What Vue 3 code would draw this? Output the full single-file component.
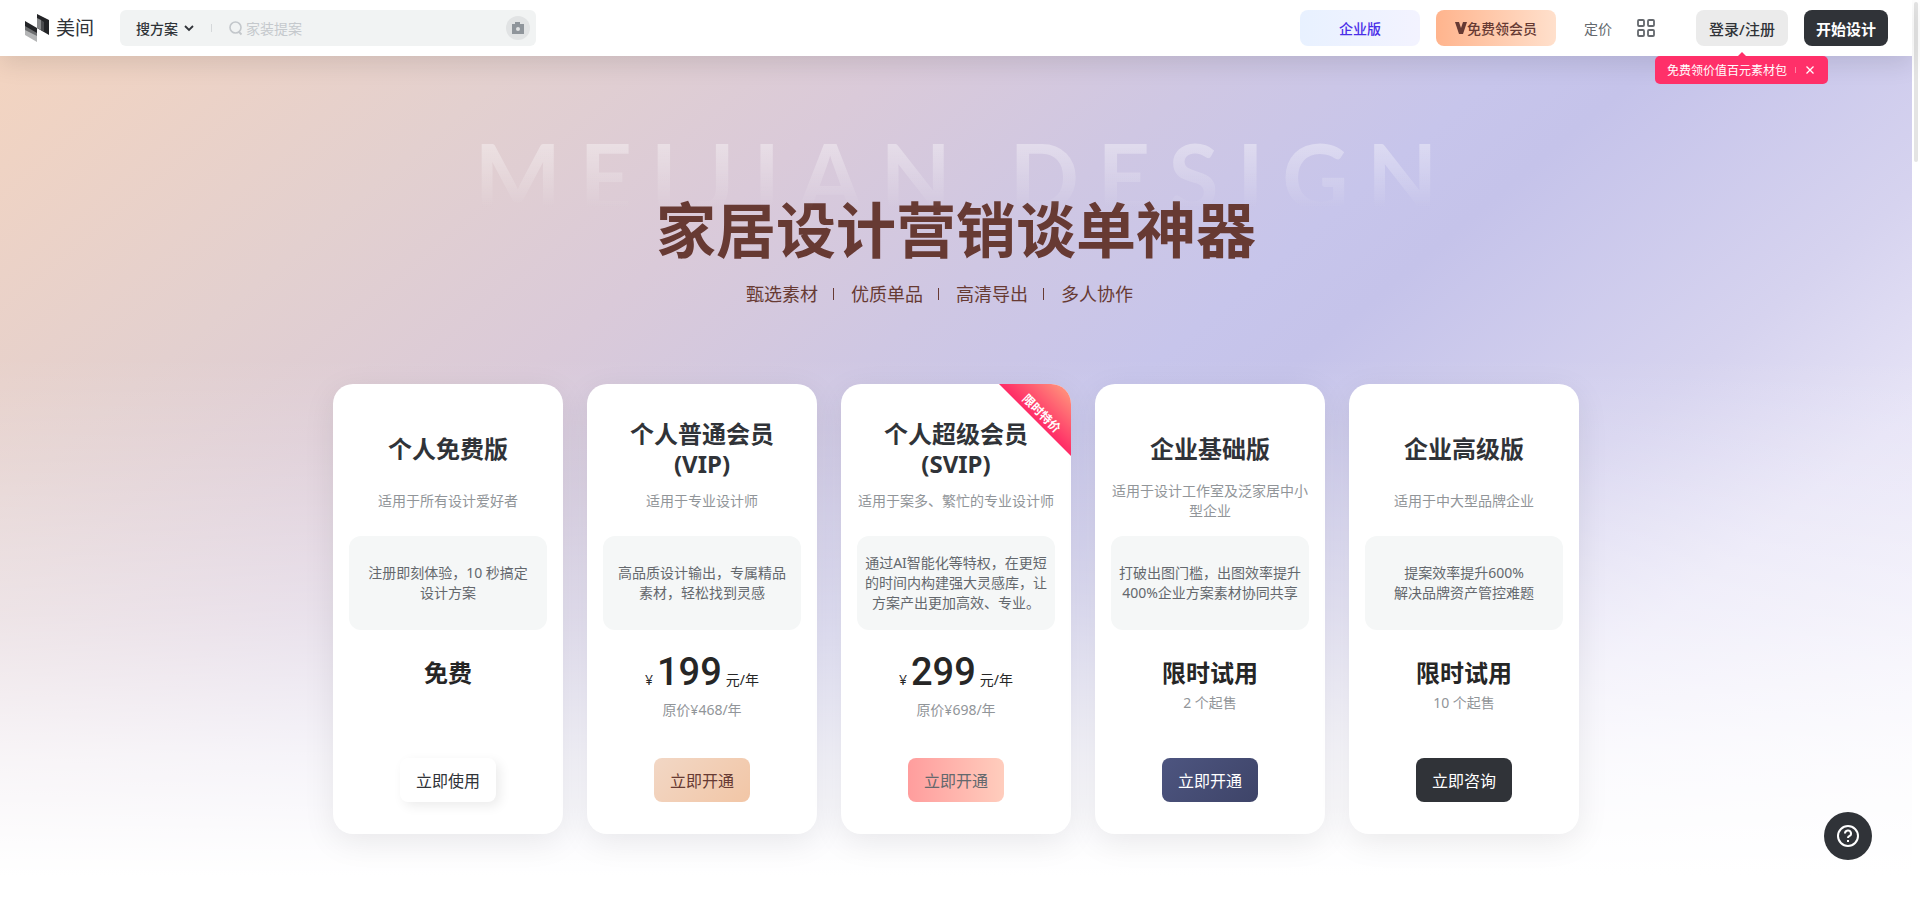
<script setup>
import { ref } from 'vue'

const keyword = ref('')
const category = ref('搜方案')
const tipOpen = ref(true)

const features = ['甄选素材', '优质单品', '高清导出', '多人协作']

const plans = [
  {
    id: 'free',
    name: ['个人免费版'],
    audience: '适用于所有设计爱好者',
    intro: ['注册即刻体验，10 秒搞定', '设计方案'],
    label: '免费',
    action: '立即使用',
  },
  {
    id: 'vip',
    name: ['个人普通会员', '(VIP)'],
    audience: '适用于专业设计师',
    intro: ['高品质设计输出，专属精品', '素材，轻松找到灵感'],
    price: '199',
    note: '原价¥468/年',
    action: '立即开通',
  },
  {
    id: 'svip',
    name: ['个人超级会员', '(SVIP)'],
    audience: '适用于案多、繁忙的专业设计师',
    intro: ['通过AI智能化等特权，在更短的时间内构建强大灵感库，让方案产出更加高效、专业。'],
    price: '299',
    note: '原价¥698/年',
    action: '立即开通',
    ribbon: '限时特价',
  },
  {
    id: 'basic',
    name: ['企业基础版'],
    audience: '适用于设计工作室及泛家居中小型企业',
    intro: ['打破出图门槛，出图效率提升400%企业方案素材协同共享'],
    label: '限时试用',
    note: '2 个起售',
    action: '立即开通',
  },
  {
    id: 'pro',
    name: ['企业高级版'],
    audience: '适用于中大型品牌企业',
    intro: ['提案效率提升600%', '解决品牌资产管控难题'],
    label: '限时试用',
    note: '10 个起售',
    action: '立即咨询',
  },
]
</script>

<template>
  <div class="shell">
    <div class="page">
      <header class="topbar">
        <a class="logo" href="#" aria-label="美间">
          <svg class="logo-mark" width="26" height="28" viewBox="0 0 26 28" aria-hidden="true">
            <path d="M1 7 13 14V21L1 14z" fill="#232427" />
            <path d="M1 12 13 19V24L1 17z" fill="#6d6e70" />
            <path d="M1 16 13 22V28L1 21z" fill="#b4b5b6" />
            <path d="M13 0 25 6V21L13 14z" fill="#232427" />
            <path d="M13 4 17 6V16L13 14z" fill="#8b8c8e" />
            <path d="M17 6 20 8V18L17 16z" fill="#4a4b4e" />
          </svg>
          <span class="logo-name">美间</span>
        </a>

        <form class="search" role="search" @submit.prevent>
          <span class="select-wrap">
            <select v-model="category" class="category" aria-label="搜索类型">
              <option>搜方案</option>
            </select>
            <svg class="chevron" width="10" height="8" viewBox="0 0 10 8" aria-hidden="true">
              <path d="M1 2 5 6 9 2" fill="none" stroke="#303338" stroke-width="1.8" />
            </svg>
          </span>
          <span class="search-line"></span>
          <svg width="15" height="15" viewBox="0 0 15 15" aria-hidden="true">
            <circle cx="6.5" cy="6.5" r="5.5" fill="none" stroke="#c3c7cb" stroke-width="1.6" />
            <path d="M9.5 10.5 12.5 13.5" stroke="#c3c7cb" stroke-width="1.8" />
          </svg>
          <input v-model="keyword" class="keyword" type="text" placeholder="家装提案" aria-label="搜索关键词" />
          <button class="camera" type="button" aria-label="以图搜索">
            <svg width="12" height="12" viewBox="0 0 12 12" aria-hidden="true">
              <path fill-rule="evenodd" d="M3 0H8V2H12V12H0V2H3zM6 5a2 2 0 1 0 0 4 2 2 0 0 0 0-4z" fill="#8f959b" />
            </svg>
          </button>
        </form>

        <nav class="actions">
          <a class="pill enterprise" href="#">企业版</a>
          <a class="pill member" href="#">
            <svg width="12" height="12" viewBox="0 0 12 12" aria-hidden="true">
              <path d="M0 0H4L6 6 8 0H12L8 12H4z" fill="#673a33" />
            </svg>
            免费领会员
          </a>
          <a class="pricing" href="#">定价</a>
          <button class="apps" type="button" aria-label="更多应用">
            <svg width="18" height="18" viewBox="0 0 18 18" fill="none" stroke="#64686d" stroke-width="1.8" aria-hidden="true">
              <rect x="1" y="1" width="6" height="6" rx="1" />
              <rect x="11" y="1" width="6" height="6" rx="1" />
              <rect x="1" y="11" width="6" height="6" rx="1" />
              <rect x="11" y="11" width="6" height="6" rx="1" />
            </svg>
          </button>
          <div class="login-wrap">
            <button class="login" type="button">登录/注册</button>
            <div v-if="tipOpen" class="tip">
              <span>免费领价值百元素材包</span>
              <i class="tip-line"></i>
              <button class="tip-close" type="button" aria-label="关闭" @click="tipOpen = false">
                <svg width="8" height="8" viewBox="0 0 8 8" aria-hidden="true">
                  <path d="M0.500 0.500 7.500 7.500M7.500 0.500 0.500 7.500" stroke="#fff" stroke-width="1.3" />
                </svg>
              </button>
            </div>
          </div>
          <button class="start" type="button">开始设计</button>
        </nav>
      </header>

      <main class="hero">
        <div class="headline">
          <h1>家居设计营销谈单神器</h1>
          <span class="watermark" aria-hidden="true">MEIJIAN DESIGN</span>
        </div>
        <ul class="features">
          <li v-for="item in features" :key="item">{{ item }}</li>
        </ul>

        <section class="plans">
          <article v-for="plan in plans" :key="plan.id" class="card" :class="plan.id">
            <div v-if="plan.ribbon" class="ribbon"><span>{{ plan.ribbon }}</span></div>
            <h2><span v-for="line in plan.name" :key="line">{{ line }}</span></h2>
            <p class="audience">{{ plan.audience }}</p>
            <div class="intro">
              <p v-for="line in plan.intro" :key="line">{{ line }}</p>
            </div>
            <div v-if="plan.price" class="price">
              <small>¥</small><strong>{{ plan.price }}</strong><small>元/年</small>
            </div>
            <div v-else class="label">{{ plan.label }}</div>
            <p v-if="plan.note" class="note">{{ plan.note }}</p>
            <button class="buy" type="button">{{ plan.action }}</button>
          </article>
        </section>
      </main>

      <button class="help" type="button" aria-label="帮助">
        <svg width="24" height="24" viewBox="0 0 24 24" fill="none" stroke="#fff" stroke-width="2" aria-hidden="true">
          <circle cx="12" cy="12" r="10" />
          <path d="M9 9.500a3 3 0 1 1 4.200 2.700c-.8.4-1.200.8-1.200 1.800" />
          <path d="M12 16V18" />
        </svg>
      </button>
    </div>
    <div class="scroll-track"><div class="scroll-thumb"></div></div>
  </div>
</template>

<style>
body {
  margin: 0;
  background: #fff;
}
</style>

<style scoped>
.shell {
  display: flex;
  min-height: 100vh;
  overflow: hidden;
  font-family: "Noto Sans", "Noto Sans CJK SC", sans-serif;
  color: #303338;
}
.shell * {
  box-sizing: border-box;
}
button,
input,
select {
  font-family: inherit;
  border: 0;
  padding: 0;
  background: none;
}
button {
  cursor: pointer;
}
a {
  color: inherit;
  text-decoration: none;
}
h1, h2, p, ul {
  margin: 0;
  padding: 0;
}
.page {
  flex: 1;
  min-width: 0;
}
.scroll-track {
  width: 8px;
  padding: 2px;
}
.scroll-thumb {
  height: 160px;
  border-radius: 2px;
  background: #e4e4e4;
}

/* top bar */
.topbar {
  position: relative;
  z-index: 2;
  display: flex;
  align-items: center;
  height: 56px;
  padding: 0 24px;
  background: #fff;
  box-shadow: 0 8px 24px rgba(0, 0, 0, 0.1);
}
.logo {
  display: flex;
  align-items: center;
  gap: 6px;
  width: 96px;
}
.logo-name {
  font-size: 19px;
  line-height: 28px;
}
.search {
  display: flex;
  align-items: center;
  width: 416px;
  height: 36px;
  padding: 0 6px 0 16px;
  border-radius: 6px;
  background: #f1f3f3;
}
.select-wrap {
  position: relative;
  display: flex;
  align-items: center;
}
.category {
  appearance: none;
  width: 58px;
  font-size: 14px;
  font-weight: 500;
  color: #303338;
}
.chevron {
  position: absolute;
  right: 0;
  pointer-events: none;
}
.search-line {
  width: 1px;
  height: 8px;
  margin: 0 17px;
  background: #d5d8da;
}
.keyword {
  flex: 1;
  min-width: 0;
  margin-left: 2px;
  font-size: 14px;
  outline: none;
}
.keyword::placeholder {
  color: #c5c9cd;
}
.camera {
  display: grid;
  place-items: center;
  width: 24px;
  height: 24px;
  border-radius: 50%;
  background: #e1e3e4;
}
.actions {
  display: flex;
  align-items: center;
  margin-left: auto;
}
.pill {
  display: flex;
  align-items: center;
  justify-content: center;
  width: 120px;
  height: 36px;
  margin-right: 16px;
  border-radius: 8px;
  font-size: 14px;
  font-weight: 500;
}
.enterprise {
  color: #4a2fe8;
  background: linear-gradient(90deg, #e8f1ff, #f3f3ff);
}
.member {
  color: #673a33;
  background: linear-gradient(90deg, #ffb48d, #ffe0cc);
}
.pricing {
  margin: 0 25px 0 12px;
  font-size: 14px;
  color: #64686d;
}
.apps {
  display: grid;
  margin-right: 41px;
}
.login-wrap {
  position: relative;
  margin-right: 16px;
}
.login,
.start {
  height: 36px;
  border-radius: 8px;
  font-size: 15px;
}
.login {
  width: 92px;
  font-weight: 500;
  color: #303338;
  background: #ebebeb;
}
.start {
  width: 84px;
  font-weight: 700;
  color: #fff;
  background: #303338;
}
.tip {
  position: absolute;
  top: 46px;
  left: 50%;
  display: flex;
  align-items: center;
  width: 173px;
  height: 28px;
  margin-left: -87px;
  padding: 0 12px;
  border-radius: 5px;
  font-size: 12px;
  white-space: nowrap;
  color: #fff;
  background: #ff3069;
}
.tip::before {
  content: "";
  position: absolute;
  top: -4px;
  left: 50%;
  margin-left: -4px;
  border: 4px solid transparent;
  border-top: 0;
  border-bottom-color: #ff3069;
}
.tip-line {
  width: 1px;
  height: 6px;
  margin: 0 10px 0 8px;
  background: #ff84a5;
}
.tip-close {
  display: grid;
}

/* hero */
.hero {
  min-height: 844px;
  padding: 134px 24px 66px;
  background:
    linear-gradient(180deg, rgba(255, 255, 255, 0) 300px, rgba(255, 255, 255, 0.15) 400px, rgba(255, 255, 255, 0.45) 560px, rgba(255, 255, 255, 0.8) 700px, #fff 820px),
    linear-gradient(140deg, #f3d4c0 0%, #e3d0cf 18%, #dacad9 31%, #cfc7e3 42%, #c7c5eb 52%, #c5c3ea 57%, #d6d3ef 71%, #e6e3f6 80%, #f4f2fb 100%);
}
.headline {
  position: relative;
  text-align: center;
}
h1 {
  font-size: 60px;
  line-height: 80px;
  font-weight: 700;
  color: #673a33;
}
.watermark {
  position: absolute;
  left: 0;
  right: 0;
  top: -60px;
  padding-left: 18px;
  font-family: Lato, sans-serif;
  font-size: 92px;
  line-height: 92px;
  font-weight: 700;
  letter-spacing: 18px;
  white-space: nowrap;
  color: transparent;
  background: linear-gradient(180deg, rgba(255, 255, 255, 0.4) 10%, rgba(255, 255, 255, 0) 86%);
  background-clip: text;
  -webkit-background-clip: text;
}
.features {
  display: flex;
  justify-content: center;
  margin-top: 10px;
  list-style: none;
}
.features li {
  display: flex;
  align-items: center;
  margin-right: 17px;
  font-size: 18px;
  line-height: 28px;
  color: #673a33;
}
.features li::after {
  content: "";
  width: 1px;
  height: 12px;
  margin-left: 15px;
  background: #673a33;
}
.features li:last-child::after {
  background: none;
}

/* plan cards */
.plans {
  display: flex;
  justify-content: center;
  gap: 24px;
  margin-top: 76px;
}
.card {
  position: relative;
  display: flex;
  flex-direction: column;
  align-items: center;
  width: 230px;
  min-height: 450px;
  padding: 35px 16px 32px;
  overflow: hidden;
  border-radius: 20px;
  text-align: center;
  background: #fff;
  box-shadow: 0 8px 32px rgba(0, 0, 0, 0.08);
}
h2 {
  display: flex;
  flex-direction: column;
  justify-content: center;
  min-height: 60px;
  font-size: 24px;
  line-height: 30px;
  font-weight: 700;
}
h2 span {
  display: block;
}
.audience {
  display: flex;
  align-items: center;
  min-height: 42px;
  margin-top: 1px;
  font-size: 14px;
  line-height: 20px;
  color: #919599;
}
.intro {
  display: flex;
  flex-direction: column;
  justify-content: center;
  align-self: stretch;
  min-height: 94px;
  margin-top: 14px;
  padding: 8px;
  border-radius: 12px;
  font-size: 14px;
  line-height: 20px;
  color: #64686d;
  background: #f5f7f7;
}
.label {
  margin-top: 28px;
  font-size: 24px;
  line-height: 30px;
  font-weight: 700;
  color: #262626;
}
.price {
  display: flex;
  align-items: baseline;
  gap: 4px;
  margin-top: 22px;
  color: #262626;
}
.price strong {
  font-family: Roboto, sans-serif;
  font-size: 38px;
  line-height: 40px;
  font-weight: 500;
}
.price small {
  font-size: 14px;
  line-height: 20px;
}
.note {
  font-size: 14px;
  line-height: 20px;
  margin-top: 5px;
  color: #919599;
}
.price + .note {
  margin-top: 8px;
}
.buy {
  width: 96px;
  height: 44px;
  margin-top: auto;
  border-radius: 8px;
  font-size: 16px;
  color: #303338;
}
.free .buy {
  background: #fff;
  box-shadow: 4px 4px 12px rgba(0, 0, 0, 0.08);
}
.vip .buy {
  color: #673a33;
  background: linear-gradient(135deg, #f2d7c5, #f2c6a6);
}
.svip .buy {
  color: #64686d;
  background: linear-gradient(90deg, #ff9d9d, #ffcdbd);
}
.basic .buy {
  color: #fff;
  background: linear-gradient(135deg, #4d5580, #3e4468);
}
.pro .buy {
  color: #fff;
  background: #303338;
}
.ribbon {
  position: absolute;
  top: 0;
  right: 0;
  display: grid;
  place-items: center;
  width: 72px;
  height: 72px;
  clip-path: polygon(0 0, 100% 0, 100% 100%);
  background: linear-gradient(45deg, #ff2b66 50%, #ff8a7a 90%);
}
.ribbon span {
  padding-bottom: 18px;
  font-size: 12px;
  line-height: 16px;
  font-weight: 700;
  white-space: nowrap;
  color: #fff;
  transform: rotate(45deg);
}

.help {
  position: fixed;
  right: 48px;
  bottom: 40px;
  display: grid;
  place-items: center;
  width: 48px;
  height: 48px;
  border-radius: 50%;
  background: #303338;
}
</style>
